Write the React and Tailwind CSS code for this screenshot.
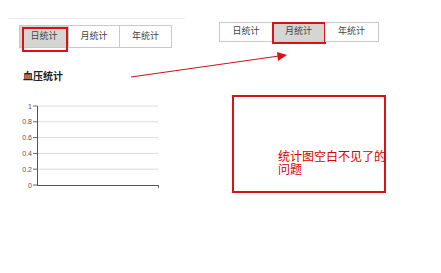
import React from 'react';

const font = { fontFamily: '"Liberation Sans", "Noto Sans CJK SC", sans-serif' };

function Tabs({ active, widths, height, boxOffset }) {
  const labels = ['日统计', '月统计', '年统计'];
  return (
    <div className="flex">
      {labels.map((label, i) => (
        <div
          key={label}
          style={{ width: widths[i], height }}
          className={`relative flex items-center justify-center border border-[#c9c9c9] ${i > 0 ? 'border-l-0' : ''} ${
            i === active ? 'bg-[#d5d5d1]' : 'bg-white'
          } text-[9px] text-[#444]`}
        >
          {label}
          {i === active && (
            <div
              className="absolute border-2 border-[#d8121a]"
              style={boxOffset}
            />
          )}
        </div>
      ))}
    </div>
  );
}

function Chart() {
  const labels = ['1', '0.8', '0.6', '0.4', '0.2', '0'];
  const top = 6;
  const step = 15.8;
  return (
    <svg width="170" height="95" className="block">
      {labels.map((l, i) => {
        const y = top + i * step;
        return (
          <g key={l}>
            {i < 5 && <line x1="37" x2="158" y1={y} y2={y} stroke="#dcdcdc" strokeWidth="1" />}
            <line x1="33" x2="37" y1={y} y2={y} stroke="#666" strokeWidth="1" />
            <text x="32" y={y + 2.5} textAnchor="end" fontSize="7" fill="#555" style={font}>
              {l}
            </text>
          </g>
        );
      })}
      <line x1="37.5" x2="37.5" y1={top} y2={top + 5 * step} stroke="#555" strokeWidth="1" />
      <line x1="37" x2="158" y1={top + 5 * step + 0.5} y2={top + 5 * step + 0.5} stroke="#555" strokeWidth="1" />
      <line x1="158.5" x2="158.5" y1={top + 5 * step} y2={top + 5 * step + 3} stroke="#666" strokeWidth="1" />
    </svg>
  );
}

export default function App() {
  return (
    <div className="relative flex w-[441px] h-[273px] overflow-hidden bg-white" style={font}>
      {/* left: day view */}
      <div className="w-[200px] flex flex-col">
        <div className="mt-[18px] ml-2 w-[177px] h-px bg-[#ececec]" />
        <div className="mt-[6px] ml-[19px]">
          <Tabs active={0} widths={[50, 51, 52]} height={23} boxOffset={{ left: 2, top: 1, width: 46, height: 25 }} />
        </div>
        <div className="mt-[23px] ml-[23px] text-[10px] leading-[12px] font-bold text-[#222]">血压统计</div>
        <div className="mt-[17px]">
          <Chart />
        </div>
      </div>

      {/* right: month view */}
      <div className="flex-1 flex flex-col">
        <div className="mt-[22px] ml-[19px]">
          <Tabs active={1} widths={[54, 52, 54]} height={20} boxOffset={{ left: -1, top: -1, width: 54, height: 22 }} />
        </div>
        <div className="mt-[53px] ml-[32px] w-[154px] h-[98px] border-2 border-[#d8121a] pl-[44px] pt-[54px]">
          <div className="whitespace-nowrap text-[12px] leading-[13px] text-[#d40000]">
            统计图空白不见了的
            <br />
            问题
          </div>
        </div>
      </div>

      {/* annotation arrow */}
      <svg className="absolute left-0 top-0 pointer-events-none" width="441" height="273">
        <line x1="131" y1="77" x2="279" y2="56" stroke="#cc1016" strokeWidth="1" />
        <polygon points="287,55 277,52 278,61" fill="#d8121a" />
      </svg>
    </div>
  );
}
